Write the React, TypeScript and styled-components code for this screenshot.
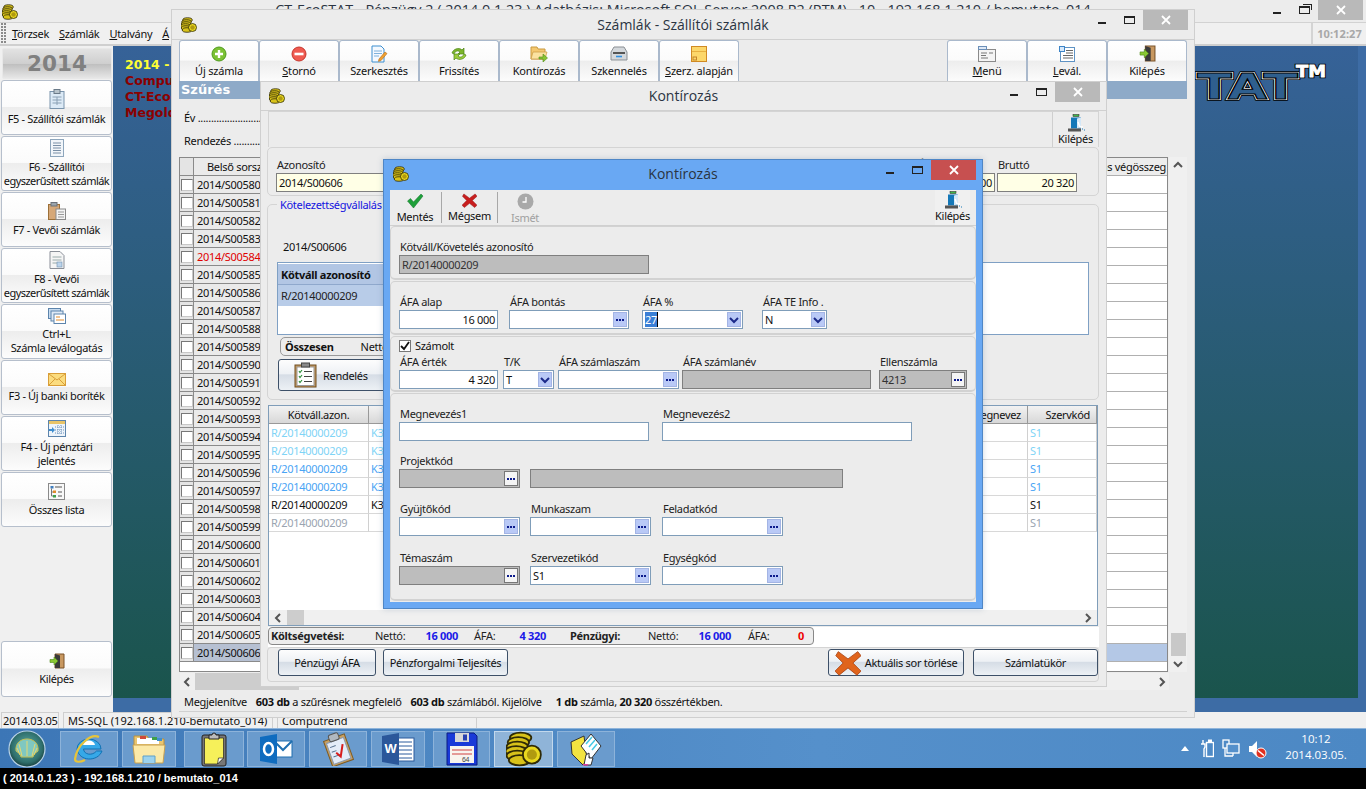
import React from 'react';
import styled, { createGlobalStyle } from 'styled-components';

const UI = `"Noto Sans", "DejaVu Sans", sans-serif`;
const TIGHT = '-0.3px';
const Global = createGlobalStyle`
  html, body { margin: 0; padding: 0; background: #f0f0f0; overflow: hidden; }
  body { font: 11px ${UI}; color: #111; letter-spacing: ${TIGHT}; }
  * { box-sizing: border-box; }
`;

/* ---------- icons ---------- */
const Coins = ({ s = 16 }: { s?: number }) => (
  <svg width={s} height={s} viewBox="0 0 32 32">
    {[[13, 6], [11, 10], [10, 14], [9, 18], [10, 22], [12, 26]].map(([x, y], i) => (
      <ellipse key={i} cx={x} cy={y} rx="9.5" ry="4.5" fill="#d8c21a" stroke="#2f2a06" strokeWidth="1.6" />
    ))}
    <circle cx="23" cy="21" r="8" fill="#e9d81f" stroke="#2f2a06" strokeWidth="1.6" />
    <circle cx="23" cy="21" r="4.5" fill="#b09a10" />
  </svg>
);
const PlusIcon = () => (
  <svg width="16" height="16" viewBox="0 0 16 16"><circle cx="8" cy="8" r="7" fill="#7cc234" stroke="#4e9a1c" /><path d="M8 4v8M4 8h8" stroke="#fff" strokeWidth="2.4" /></svg>
);
const MinusIcon = () => (
  <svg width="16" height="16" viewBox="0 0 16 16"><circle cx="8" cy="8" r="7" fill="#ef5a50" stroke="#c6362c" /><path d="M3.5 8h9" stroke="#fff" strokeWidth="2.6" /></svg>
);
const EditIcon = () => (
  <svg width="18" height="18" viewBox="0 0 18 18"><path d="M2 1h9l3 3v13H2z" fill="#f4f9ff" stroke="#3d8fd0" /><path d="M4 6h8M4 8.5h8M4 11h5" stroke="#7fb2dc" /><path d="M9 14l6-7 2 1.6-6 7-2.6.8z" fill="#f0a030" stroke="#b06c18" strokeWidth=".6" /></svg>
);
const RefreshIcon = () => (
  <svg width="18" height="16" viewBox="0 0 18 16"><path d="M2 7c1-4 7-6 10-3l2-2v6H8l2-2C8 4 5 5 4 8z" fill="#7cb52c" stroke="#4b8414" strokeWidth=".7" /><path d="M16 9c-1 4-7 6-10 3l-2 2V8h6l-2 2c2 2 5 1 6-2z" fill="#9ccc3c" stroke="#4b8414" strokeWidth=".7" /></svg>
);
const FolderIcon = () => (
  <svg width="18" height="16" viewBox="0 0 18 16"><path d="M1 1h6l1 2h7v10H1z" fill="#f4c870" stroke="#c99a40" /><path d="M1 13l2-7h14l-2 7z" fill="#fbe2a0" stroke="#c99a40" strokeWidth=".7" /><path d="M9 11h4V8l4.5 4-4.500 4v-3H9z" fill="#8ac432" stroke="#4e8a18" strokeWidth=".6" /></svg>
);
const ScanIcon = () => (
  <svg width="18" height="15" viewBox="0 0 18 15"><path d="M4 1h10l3 5v8H1V6z" fill="#d4d8dc" stroke="#8a8f94" /><path d="M3 6h12v2H3z" fill="#555" /><path d="M6 10.500h6" stroke="#2f8fe0" strokeWidth="1.600" /></svg>
);
const StickyIcon = () => (
  <svg width="16" height="16" viewBox="0 0 16 16"><rect x=".5" y=".5" width="15" height="15" fill="#fcd76a" stroke="#d08a24" /><path d="M1 5.500h14" stroke="#e7b040" /><rect x="2" y="11" width="3.500" height="3" fill="none" stroke="#c48428" /></svg>
);
const MenuIcon = () => (
  <svg width="18" height="16" viewBox="0 0 18 16"><rect x=".5" y="3.500" width="17" height="12" fill="#f4f4f4" stroke="#8a8a8a" /><rect x=".5" y=".5" width="8" height="3" fill="#dfe8f4" stroke="#6b8fb8" /><path d="M3 7h6M3 9.500h5M3 12h7M11 7h4" stroke="#777" /></svg>
);
const LevalIcon = () => (
  <svg width="16" height="16" viewBox="0 0 16 16"><rect x="1.500" y="1.500" width="14" height="14" fill="#fff" stroke="#5f93c4" /><rect x=".5" y=".5" width="5" height="5" fill="#d6e8fa" stroke="#3d85c8" /><path d="M7 4.500h7M7 7h7M4 9.500h10M4 12h10" stroke="#666" /></svg>
);
const DoorIcon = ({ s = 16 }: { s?: number }) => (
  <svg width={s} height={s} viewBox="0 0 16 16"><path d="M6 1h9v14H6z" fill="#c89860" stroke="#7a5228" /><path d="M6 1l5 1.500V15H6z" fill="#3a3a3a" /><path d="M1 6.500h4V4l4 4-4 4V9.500H1z" fill="#8ac832" stroke="#4e8a18" strokeWidth=".6" /></svg>
);
const ExitBlue = () => (
  <svg width="20" height="18" viewBox="0 0 20 18"><rect x="7" y=".5" width="6" height="2" fill="#3fb54a" stroke="#222" strokeWidth=".5" /><rect x="5" y="3.500" width="10" height="11" fill="#1478b8" /><path d="M11 4.500l4-1V13l-4 1.500z" fill="#d4e8f8" /><path d="M12 8l2 5h3" fill="none" stroke="#fff" strokeWidth="1.400" /><rect x="2" y="14.500" width="13" height="3" fill="#555" /><path d="M16 15h1M18 16h1" stroke="#1478b8" /></svg>
);
const CheckGreen = () => (
  <svg width="18" height="16" viewBox="0 0 18 16"><path d="M1.500 8l3-2.500 3 3.500 7.500-8L17 3 7.500 15z" fill="#1fa03a" stroke="#107028" strokeWidth=".5" /></svg>
);
const CrossRed = ({ s = 16, c = '#c81e1e', d = '#8f1010' }: { s?: number; c?: string; d?: string }) => (
  <svg width={s} height={s} viewBox="0 0 16 16"><path d="M2 1l6 4.500L14 1l2 2.500-5 4.500 5 5-2.500 2.500L8 11l-5.500 4.500L0 13l5-5L.5 3.500z" fill={c} stroke={d} strokeWidth=".5" /></svg>
);
const ClockGray = () => (
  <svg width="17" height="17" viewBox="0 0 17 17"><circle cx="8.500" cy="8.500" r="8" fill="#a9a9a9" /><path d="M9 4v5H5.500" stroke="#fff" strokeWidth="1.300" fill="none" /></svg>
);
const Chev = ({ dir = 'down', c = '#555' }: { dir?: 'up' | 'down' | 'left' | 'right'; c?: string }) => {
  const p = { up: 'M1 6l4-4 4 4', down: 'M1 3l4 4 4-4', left: 'M7 1L3 5l4 4', right: 'M3 1l4 4-4 4' }[dir];
  return <svg width="10" height="10" viewBox="0 0 10 10"><path d={p} fill="none" stroke={c} strokeWidth="2" /></svg>;
};
const SideSheet = () => (
  <svg width="16" height="20" viewBox="0 0 16 20"><rect x="1" y="2.500" width="14" height="17" fill="#dceaf6" stroke="#7a94ac" /><rect x="5" y=".5" width="6" height="4" fill="#b8c4cc" stroke="#6a7a88" /><path d="M3.500 8h9M3.500 11h9M3.500 14h9M8 8v8" stroke="#8aa0b4" /></svg>
);
const SideLines = () => (
  <svg width="14" height="18" viewBox="0 0 14 18"><rect x=".5" y=".5" width="13" height="17" fill="#f2f6fa" stroke="#8ea6bc" /><path d="M3 4h8M3 6.500h8M3 9h8M3 11.500h8M3 14h8" stroke="#7a8fa6" /></svg>
);
const SideClip = () => (
  <svg width="18" height="18" viewBox="0 0 18 18"><rect x=".5" y="2.500" width="11" height="15" fill="#d6a878" stroke="#9c7038" /><rect x="3" y=".5" width="6" height="3.500" fill="#9aa4ac" stroke="#6a7078" /><rect x="8" y="7" width="9.500" height="10.500" fill="#f4f4f4" stroke="#8a8a8a" /><path d="M10 10h6M10 12.500h6M10 15h6" stroke="#999" /></svg>
);
const SideDoc = () => (
  <svg width="16" height="18" viewBox="0 0 16 18"><path d="M1 .5h10l4 4v13H1z" fill="#f5f5f5" stroke="#8a8f98" /><path d="M3.500 6h9M3.500 9h9M3.500 12h6" stroke="#9aa" /><rect x="8" y="11" width="5" height="5" fill="#bcd4ec" stroke="#6f90b0" strokeWidth=".6" /></svg>
);
const SideStack = () => (
  <svg width="18" height="16" viewBox="0 0 18 16"><rect x=".5" y=".5" width="12" height="10" fill="#c8dcf0" stroke="#5c84ac" /><rect x="3" y="3" width="12" height="10" fill="#dfeaf6" stroke="#5c84ac" /><rect x="6" y="6" width="11.500" height="9.500" fill="#fff" stroke="#5c84ac" /><path d="M8 9h4M8 12h8" stroke="#e08a2a" /></svg>
);
const SideEnv = () => (
  <svg width="18" height="13" viewBox="0 0 18 13"><rect x=".5" y=".5" width="17" height="12" fill="#fbdc7e" stroke="#d99e38" /><path d="M1 1l8 6 8-6M1 12l6-6M17 12l-6-6" fill="none" stroke="#d99e38" /></svg>
);
const SideCash = () => (
  <svg width="18" height="17" viewBox="0 0 18 17"><rect x=".5" y=".5" width="17" height="16" fill="#eef4fa" stroke="#5c84ac" /><rect x="1" y="1" width="16" height="3" fill="#e8c468" /><path d="M7 7h9M7 10h9M7 13h9M10 5v10M13 5v10" stroke="#6d93bd" strokeDasharray="1 1" /><path d="M1 9h3V7l3 3-3 3v-2H1z" fill="#3f8ecf" /></svg>
);
const SideTree = () => (
  <svg width="17" height="17" viewBox="0 0 17 17"><rect x=".5" y=".5" width="16" height="16" fill="#f8f8f8" stroke="#8a8a8a" /><rect x="2.500" y="3" width="3" height="2.500" fill="#3f7ec0" /><rect x="5" y="7.500" width="3" height="2.500" fill="#e08a2a" /><rect x="5" y="12" width="3" height="2.500" fill="#3fa04a" /><path d="M7 4h7M10 9h4M10 13h4" stroke="#555" /><path d="M3.500 5.500V13H5M3.500 9H5" stroke="#777" fill="none" /></svg>
);
const ClipBig = () => (
  <svg width="25" height="26" viewBox="0 0 25 26"><rect x="2" y="3" width="21" height="22" fill="#c49a62" stroke="#6f4d1e" /><rect x="4" y="5" width="17" height="18.500" fill="#fff" stroke="#999" /><rect x="8.500" y="1" width="8" height="4" fill="#8a8a8a" stroke="#444" /><path d="M6 9l1 1.500 2-2.500M6 14l1 1.500 2-2.500M6 19l1 1.500 2-2.500" stroke="#2f8f3a" fill="none" strokeWidth="1.200" /><path d="M11 9.500h8M11 14.500h8M11 19.500h8" stroke="#444" strokeWidth="1.200" /></svg>
);
const XOrange = () => <CrossRed s={26} c="#e0641c" d="#a84010" />;

/* taskbar icons */
const Shell = () => (
  <svg width="38" height="38" viewBox="0 0 38 38">
    <defs><radialGradient id="orb" cx=".5" cy=".45" r=".6"><stop offset="0" stopColor="#5fb0a8" /><stop offset=".7" stopColor="#2f6f6c" /><stop offset="1" stopColor="#12302e" /></radialGradient></defs>
    <circle cx="19" cy="19" r="18" fill="url(#orb)" stroke="#b8d2e6" strokeWidth="1.200" />
    <path d="M8 21c-1-9 6-12 11-12s12 3 11 12l-4 3-1 3H13l-1-3z" fill="#7fc8c0" stroke="#c8c050" strokeWidth="1" />
    <path d="M19 26V11M14 26l-3-12M24 26l3-12M12 25l-3-7M26 25l3-7" stroke="#e8d870" strokeWidth="1" />
  </svg>
);
const IE = () => (
  <svg width="34" height="34" viewBox="0 0 34 34">
    <path d="M5 17a12 10 0 0 1 24 0H11.500c.5 6 9 7 13 2h5.500c-4 11-23 11-25-2z" fill="#36a8e8" stroke="#1172b4" />
    <path d="M11 13h12c-1-6-11-6-12 0z" fill="#fff" />
    <path d="M27 5c-8-4-22 8-24 22 0 4 6 3 10 1" fill="none" stroke="#e7c43a" strokeWidth="2.200" />
  </svg>
);
const FolderBig = () => (
  <svg width="34" height="32" viewBox="0 0 34 32">
    <path d="M2 3h13l2 3h15v7H2z" fill="#e9c670" stroke="#b89040" />
    <rect x="5" y="5" width="22" height="6" fill="#fff" />
    <rect x="8" y="3" width="6" height="3" fill="#d04a3a" /><rect x="20" y="4" width="5" height="3" fill="#3f9f4a" /><rect x="25" y="5" width="5" height="3" fill="#3f8fd0" />
    <path d="M1 12h32l-2 18H3z" fill="#fbe9a8" stroke="#c8a050" />
    <path d="M11 30v-7h12v7" fill="#9cd2ee" stroke="#5f9fc8" />
  </svg>
);
const ClipTask = () => (
  <svg width="26" height="36" viewBox="0 0 26 36">
    <rect x="1" y="4" width="24" height="31" rx="2" fill="#777" stroke="#222" />
    <path d="M3.500 7h19v20l-6 6h-13z" fill="#f6f05a" stroke="#222" strokeWidth=".7" />
    <path d="M16.500 33l1-6h5z" fill="#fff" stroke="#222" strokeWidth=".7" />
    <path d="M8 8V4h3a2 2 0 0 1 4 0h3v4z" fill="#bbb" stroke="#222" />
  </svg>
);
const Outlook = () => (
  <svg width="34" height="32" viewBox="0 0 34 32">
    <rect x="15" y="8" width="18" height="16" fill="#fff" stroke="#1f6fb0" />
    <path d="M15 8l9 9 9-9" fill="none" stroke="#1f6fb0" strokeWidth="2" />
    <path d="M1 4l17-3v30L1 28z" fill="#0f6cbf" />
    <ellipse cx="9.500" cy="16" rx="4.500" ry="6" fill="none" stroke="#fff" strokeWidth="2.500" />
  </svg>
);
const CheckTask = () => (
  <svg width="34" height="34" viewBox="0 0 34 34">
    <g transform="rotate(-20 17 17)">
      <rect x="6" y="5" width="22" height="27" fill="#c8a060" stroke="#7d5a24" />
      <rect x="8" y="8" width="18" height="22" fill="#e4ecf8" stroke="#8a9ab0" />
      <rect x="12" y="1" width="10" height="7" rx="2" fill="#b0b8c0" stroke="#555" />
      <path d="M10 13h6M10 18h5M10 23h7" stroke="#56708e" />
      <path d="M14 20l3 5 6-11" fill="none" stroke="#d81c1c" strokeWidth="2" />
    </g>
  </svg>
);
const Word = () => (
  <svg width="34" height="34" viewBox="0 0 34 34">
    <rect x="15" y="6" width="18" height="23" fill="#fff" stroke="#2a5a9c" />
    <path d="M18 10h13M18 14h13M18 18h13M18 22h13M18 26h13" stroke="#2a5a9c" />
    <path d="M1 4l17-3v32L1 30z" fill="#2b579a" />
    <text x="3.500" y="21" fontFamily="Liberation Sans" fontSize="13" fontWeight="700" fill="#fff">W</text>
  </svg>
);
const Floppy = () => (
  <svg width="32" height="34" viewBox="0 0 32 34">
    <path d="M1 1h27l3 3v29H1z" fill="#1a3ad8" stroke="#0c1c80" />
    <rect x="9" y="1" width="14" height="9" fill="#d8d8d8" /><rect x="17" y="2.500" width="4" height="6" fill="#2840b0" />
    <rect x="4" y="14" width="24" height="17" fill="#f8f4ee" />
    <path d="M6 18h20M6 22h20" stroke="#d04040" />
    <text x="16" y="30" fontFamily="Liberation Sans" fontSize="7" fill="#444">64</text>
  </svg>
);
const FolderDia = () => (
  <svg width="34" height="34" viewBox="0 0 34 34">
    <path d="M2 10l13-6 3 24-4 5L3 22z" fill="#f4e440" stroke="#333" />
    <path d="M12 14L22 2l10 12-10 13z" fill="#fff" stroke="#333" />
    <path d="M17 12l6-7M20 15l6-7M23 18l5-6" stroke="#44c8e4" strokeWidth="1.500" />
    <path d="M15 33l2-10 3-2v5h4l-2 7z" fill="#fff" stroke="#333" />
    <rect x="14" y="32" width="5" height="1.500" fill="#e040a0" />
  </svg>
);
const TrayPlug = () => (
  <svg width="14" height="20" viewBox="0 0 14 20" fill="none" stroke="#fff"><rect x="6.500" y="3.500" width="7" height="14" strokeWidth="1.400" /><rect x="8.500" y="1" width="3" height="2" fill="#fff" /><path d="M3 1v4M1 5h4v3l-1 2v8" strokeWidth="1.400" /></svg>
);
const TrayNet = () => (
  <svg width="18" height="20" viewBox="0 0 18 20" fill="none" stroke="#fff" strokeWidth="1.300"><rect x="1" y="1" width="6" height="8" /><rect x="5" y="5" width="12" height="9" fill="#5590cb" /><path d="M3 9v8h8M11 14v3" /></svg>
);
const TrayVol = () => (
  <svg width="20" height="20" viewBox="0 0 20 20"><path d="M1 7h3l5-5v16l-5-5H1z" fill="#fff" /><circle cx="13" cy="14" r="5" fill="#e03020" stroke="#fff" /><path d="M10 11.500l6 5" stroke="#fff" strokeWidth="1.600" /></svg>
);

/* ---------- shell of the main app ---------- */
const Page = styled.div`
  position: relative; width: 1366px; height: 789px; overflow: hidden;
  display: flex; flex-direction: column; background: #f0f0f0;
`;
const MainTitle = styled.div`
  height: 23px; display: grid; grid-template-columns: 1fr auto 1fr; align-items: start;
  background: #ececec; border-bottom: 1px solid #d2d2d2;
`;
const TitleText = styled.div<{ $size?: number }>`
  font: ${(p) => p.$size ?? 14}px "Open Sans", ${UI}; color: #2a3442; white-space: nowrap; line-height: 20px; letter-spacing: 0;
`;
const CoinSlot = styled.div<{ $l: number; $t: number }>`
  padding: ${(p) => p.$t}px 0 0 ${(p) => p.$l}px; display: flex;
`;
const CtrlRow = styled.div<{ $r: number }>`
  justify-self: end; display: flex; align-items: flex-start; margin-right: ${(p) => p.$r}px;
`;
const MinBtn = styled.div`
  width: 8px; height: 2px; margin: 12px 18px 0 0; background: #222;
`;
const MaxBtn = styled.div`
  width: 11px; height: 8px; margin: 6px 8px 0 0; border: 1px solid #222; border-top-width: 2px;
`;
const RestoreBtn = styled(MaxBtn)`
  height: 8px; margin-top: 6px; box-shadow: 2px -2px 0 -1px #ececec, 3px -3px 0 -1px #222;
`;
const CloseBtn = styled.div<{ $red?: boolean }>`
  width: 45px; height: 20px; display: flex; align-items: center; justify-content: center;
  background: ${(p) => (p.$red ? '#c75050' : '#b9b9b9')};
`;
const Controls = ({ r, red, restore }: { r: number; red?: boolean; restore?: boolean }) => (
  <CtrlRow $r={r}>
    <MinBtn />
    {restore ? <RestoreBtn /> : <MaxBtn />}
    <CloseBtn $red={red}>
      <svg width="10" height="10" viewBox="0 0 10 10"><path d="M1 1l8 8M9 1L1 9" stroke="#fff" strokeWidth="1.800" /></svg>
    </CloseBtn>
  </CtrlRow>
);
const MenuBar = styled.div`
  height: 23px; display: flex; align-items: center; background: #f0f0f0; border-bottom: 2px solid #cfcfcf;
`;
const Grip = styled.div`
  width: 6px; height: 21px; margin: 0 5px 0 1px;
  background: radial-gradient(circle at 1px 1px, #8a8a8a 1px, transparent 1px) 0 0 / 3px 3px;
`;
const MenuItem = styled.span`
  display: inline-block; font: 11px ${UI}; margin-right: 10px; color: #111;
  &::first-letter { text-decoration: underline; }
`;
const Clock = styled.div`
  margin-left: auto; height: 100%; width: 55px; border-left: 2px solid #d4d4d4; letter-spacing: .1px;
  font: bold 11px ${UI}; color: #a8a8a8; display: flex; align-items: center; justify-content: center;
`;
const Body = styled.div`
  height: 666px; display: flex;
`;
const Sidebar = styled.nav`
  width: 113px; padding: 2px 1px 15px 1px; display: flex; flex-direction: column; gap: 1px; background: #f0f0f0;
`;
const btnFace = `linear-gradient(#ffffff 0, #fbfbfb 48%, #ededed 50%, #fcfcfc 100%)`;
const YearBox = styled.div`
  height: 31px; background: linear-gradient(#e2e2e2, #cfcfcf 50%, #bdbdbd 50%, #e6e6e6); letter-spacing: 0;
  border: 1px solid #e8e8e8; border-radius: 2px; margin-left: 1px;
  font: bold 21.5px "DejaVu Sans", sans-serif; color: #808080; display: flex; align-items: center; justify-content: center;
`;
const SideBtn = styled.button<{ $h?: number; $bottom?: boolean }>`
  all: unset; box-sizing: border-box; height: ${(p) => p.$h ?? 55}px; margin-top: ${(p) => (p.$bottom ? 'auto' : 0)};
  border: 1px solid #b6bfcc; border-radius: 3px; background: ${btnFace}; letter-spacing: -0.35px; white-space: nowrap;
  display: flex; flex-direction: column; align-items: center; justify-content: center; gap: 3px;
  font: 11px/14px ${UI}; text-align: center; color: #111;
`;
const Squeeze = styled.span`
  letter-spacing: -0.55px;
`;
const Desktop = styled.div`
  flex: 1; background: #3d6ca5; padding: 0 8px 14px 0; display: flex;
`;
const DesktopInner = styled.div`
  flex: 1; position: relative; padding: 11px 12px; background: linear-gradient(#366298, #1a544c); letter-spacing: 0;
  font: bold 12.5px/16px "DejaVu Sans", sans-serif; color: #8b0000;
`;
const YellowLine = styled.div`color: #ffff33;`;
const LogoSvg = styled.svg`
  position: absolute; left: 1080px; top: 14px;
`;
const StatusBar = styled.div`
  height: 16px; display: flex; gap: 4px; padding: 0 1px; background: #f0f0f0; align-items: stretch;
`;
const StatusCell = styled.div<{ $w: number; $pad?: number }>`
  width: ${(p) => p.$w}px; border: 1px solid #cfcfcf; border-bottom: 0; padding: 0 0 0 ${(p) => p.$pad ?? 4}px; letter-spacing: ${(p) => (p.$pad === 1 ? '-0.15px' : 0)};
  font: 11px/15px ${UI}; white-space: nowrap; overflow: hidden;
`;
const Taskbar = styled.div`
  height: 40px; display: flex; align-items: center; padding: 0 0 0 8px;
  background: linear-gradient(90deg, #3c76b6, #4c86c2 30%, #5590cb 60%, #4c88c4);
  border-top: 1px solid #8fb4da;
`;
const TaskBtn = styled.div<{ $w: number; $gap?: number; $on?: boolean }>`
  width: ${(p) => p.$w}px; height: 36px; margin-left: ${(p) => p.$gap ?? 4}px;
  display: flex; align-items: center; justify-content: center;
  background: ${(p) => (p.$on ? '#8fb4d8' : '#6a9bcd')}; border: 1px solid ${(p) => (p.$on ? '#c2d8ec' : '#8db3da')};
`;
const Tray = styled.div`
  margin-left: auto; display: flex; align-items: center; gap: 8px; color: #fff;
`;
const ClockBox = styled.div`
  width: 74px; margin: -3px 13px 0 3px; text-align: center; font: 11.5px/16px "Open Sans", ${UI}; color: #fff; letter-spacing: 0;
`;
const TrayArrow = styled.div`
  width: 0; height: 0; margin-right: 3px; border: 4px solid transparent; border-top: 0; border-bottom: 5px solid #fff;
`;
const Black = styled.div`
  height: 21px; background: #000; color: #fff; padding-left: 3px; letter-spacing: 0;
  font: bold 11px/21px "Liberation Sans", sans-serif;
`;

/* ---------- windows ---------- */
const Win = styled.section<{ $x: number; $y: number; $w: number; $h: number }>`
  position: absolute; left: ${(p) => p.$x}px; top: ${(p) => p.$y}px; width: ${(p) => p.$w}px; height: ${(p) => p.$h}px;
  background: #ececec; border: 1px solid #cfcfcf; display: flex; flex-direction: column;
`;
const BlueWin = styled(Win)`
  background: #69a8f3; border-color: #4f86c6; box-shadow: 0 0 6px rgba(60,90,130,.25);
`;
const WinTitle = styled.div<{ $h: number; $line?: boolean }>`
  height: ${(p) => p.$h}px; flex: none; display: grid; grid-template-columns: 1fr auto 1fr; align-items: start;
  ${(p) => (p.$line ? 'border-bottom: 1px solid #d0d0d0;' : '')}
`;
const TitleMid = styled(TitleText)<{ $pt?: number }>`
  padding-top: ${(p) => p.$pt ?? 5}px;
`;
const ToolStrip = styled.div`
  height: 41px; flex: none; padding: 0 7px; display: flex;
`;
const ToolBtn = styled.button`
  all: unset; box-sizing: border-box; width: 80px; height: 41px; flex: none; letter-spacing: -0.2px;
  border: 1px solid #aab9cc; border-bottom: 0; border-radius: 3px 3px 0 0; background: ${btnFace};
  display: flex; flex-direction: column; align-items: center; padding-top: 2px; font: 11px/14px ${UI};
  u { text-decoration: underline; }
`;
const ToolIcon = styled.div`
  height: 21px; display: flex; align-items: center; justify-content: center;
`;
const Grow = styled.div`flex: 1;`;
const FilterHead = styled.div`
  height: 18px; flex: none; margin: 0 7px; background: #8eaac8; color: #fff; letter-spacing: 0;
  font: bold 13px/18px "DejaVu Sans", sans-serif; padding-left: 2px;
`;
const FilterBody = styled.div`
  height: 58px; flex: none; padding: 12px 0 0 12px; font: 11px ${UI}; display: flex; flex-direction: column; gap: 9px;
  white-space: nowrap;
`;
const Dotted = styled.div`
  height: 14px; line-height: 14px;
`;
const Grid = styled.div`
  height: 515px; flex: none; margin: 0 7px 0 7px; display: flex; align-items: stretch;
`;
const GridLeft = styled.div`
  width: 200px; background: #fff; border: 1px solid #888; border-right: 0; display: flex; flex-direction: column;
`;
const RowL = styled.div<{ $head?: boolean }>`
  height: 18px; flex: none; display: flex; border-bottom: 1px solid #8a8a8a; background: #eaeaea;
`;
const Sel = styled.div`
  width: 14px; flex: none; border-right: 1px solid #8a8a8a; display: flex; align-items: center; justify-content: center; background: #e4e4e4;
`;
const Tick = styled.div`
  width: 12px; height: 12px; background: #fff; border: 1px solid #c8c8c8; border-top-color: #777; border-left-color: #777;
`;
const CellL = styled.div<{ $bad?: boolean; $sel?: boolean; $head?: boolean }>`
  flex: 1; padding-left: ${(p) => (p.$head ? 13 : 3)}px; font: 11px/17px ${UI};
  color: ${(p) => (p.$bad ? '#e00000' : '#111')}; background: ${(p) => (p.$sel ? '#b6c0d2' : '#eaeaea')}; white-space: nowrap;
`;
const GridMid = styled.div`flex: 1; background: #fff;`;
const GridRight = styled.div`
  width: 164px; background: #fff; border: 1px solid #888; border-left: 0; display: flex; flex-direction: column;
`;
const RCell = styled.div<{ $sel?: boolean; $head?: boolean }>`
  height: 18px; flex: none; border-bottom: 1px solid #b0b0b0; background: ${(p) => (p.$sel ? '#b4c8e6' : p.$head ? '#ededed' : '#fff')};
  font: 11px/17px ${UI}; text-align: right; padding-right: 1px; white-space: nowrap;
`;
const VScroll = styled.div`
  width: 18px; flex: none; padding: 4px 0 3px; margin-left: 1px; display: flex; flex-direction: column; align-items: center; background: #f0f0f0;
`;
const VThumb = styled.div`
  width: 15px; height: 23px; margin-top: auto; margin-bottom: 3px; background: #c8c8c8;
`;
const HScroll = styled.div<{ $m: string; $h: number }>`
  height: ${(p) => p.$h}px; flex: none; margin: ${(p) => p.$m}; display: flex; align-items: center; padding: 0 2px; background: #f0f0f0;
`;
const HThumb = styled.div<{ $w: number; $l?: number }>`
  width: ${(p) => p.$w}px; height: 100%; background: #cdcdcd; margin-left: ${(p) => p.$l ?? 0}px;
`;
const PushRight = styled.div`margin-left: auto; display: flex;`;
const StatusLine = styled.div`
  margin: 3px 7px 0; height: 19px; padding-left: 5px; border-bottom: 1px solid #d0d0d0; font: 11px/17px ${UI}; white-space: pre; display: flex;
  b { font-weight: 700; }
`;
const Stat = styled.span<{ $l?: number }>`
  margin-left: ${(p) => p.$l ?? 0}px;
`;

/* middle window */
const KilepesStrip = styled.div`
  height: 36px; flex: none; margin: 0 7px; padding: 0; display: flex; justify-content: flex-end;
  border: 1px solid #d4d4d4; border-bottom: 0;
`;
const KilepesBtn = styled.div`
  width: 46px; height: 35px; display: flex; flex-direction: column; align-items: center; padding-top: 2px;
  font: 11px/13px ${UI}; border-left: 1px solid #cfcfcf; background: #ededed; gap: 0;
`;
const Panel = styled.div<{ $h: number; $t?: number }>`
  height: ${(p) => p.$h}px; flex: none; margin: ${(p) => p.$t ?? 0}px 7px 0 6px; border: 1px solid #d4d4d4; border-radius: 5px; position: relative;
`;
const TopRow = styled.div`
  display: flex; justify-content: space-between; padding: 8px 21px 0 8px;
`;
const Field = styled.div<{ $w: number; $l?: number; $pad?: number }>`
  width: ${(p) => p.$w}px; flex: none; margin-left: ${(p) => p.$l ?? 0}px;
  > label { display: block; height: 17px; line-height: 17px; padding-left: ${(p) => p.$pad ?? 1}px; white-space: nowrap; font: 11px/17px ${UI}; color: #222; }
`;
const Input = styled.div<{ $tone?: 'white' | 'gray' | 'cream' }>`
  height: 19px; display: flex; align-items: center;
  padding: 0 2px 0 2px; font: 11px ${UI}; overflow: hidden;
  background: ${(p) => (p.$tone === 'gray' ? '#bdbdbd' : p.$tone === 'cream' ? '#ffffe6' : '#fff')};
  border: 1px solid ${(p) => (p.$tone === 'gray' || p.$tone === 'cream' ? '#7f7f7f' : '#7f9db9')};
  color: ${(p) => (p.$tone === 'gray' ? '#333' : '#111')};
`;
const InputText = styled.span<{ $right?: boolean }>`
  flex: 1; white-space: nowrap; text-align: ${(p) => (p.$right ? 'right' : 'left')};
`;
const Pick = styled.div<{ $off?: boolean }>`
  width: 14px; height: 15px; flex: none; margin-right: -1px; display: flex; align-items: center; justify-content: center; gap: 1px;
  background: ${(p) => (p.$off ? '#f4f4f4' : '#b9c9f6')}; border: 1px solid ${(p) => (p.$off ? '#777' : '#a3b4e4')};
  i { width: 2px; height: 2px; background: #0b1a8c; display: block; }
`;
const Dots = ({ off }: { off?: boolean }) => <Pick $off={off}><i /><i /><i /></Pick>;
const Drop = () => <Pick><Chev dir="down" c="#1c2a8a" /></Pick>;
const Legend = styled.div`
  position: absolute; left: 9px; top: -7px; padding: 0 3px; background: #ececec; color: #1414e0; font: 11px/14px ${UI}; white-space: nowrap;
`;
const RefNo = styled.div`
  padding: 34px 0 0 15px; height: 57px; font: 11px ${UI}; white-space: nowrap;
`;
const MiniGrid = styled.div`
  margin: 0 9px 0 9px; height: 73px; background: #fff; border: 1px solid #7fa0c4; padding-top: 1px;
`;
const MiniHead = styled.div`
  width: 300px; height: 21px; background: #b2c6e4; font: bold 11px/21px ${UI}; padding-left: 3px; border-bottom: 1px solid #8fa8cc;
`;
const MiniRow = styled.div`
  width: 300px; height: 21px; background: #b8cce8; font: 11px/21px ${UI}; padding-left: 3px; color: #222;
`;
const SumPill = styled.div`
  margin: 2px 0 0 12px; width: 300px; height: 19px; border: 1px solid #999; border-radius: 5px 0 0 5px; padding-left: 4px;
  display: flex; gap: 27px; font: 11px/17px ${UI}; white-space: nowrap; b { font-weight: 700; }
`;
const PushBtn = styled.button<{ $w: number; $h?: number; $l?: number }>`
  all: unset; box-sizing: border-box; width: ${(p) => p.$w}px; height: ${(p) => p.$h ?? 27}px; margin-left: ${(p) => p.$l ?? 0}px; flex: none;
  border: 1px solid #3d5068; border-radius: 3px; display: flex; align-items: center; justify-content: center; gap: 4px; letter-spacing: ${TIGHT};
  background: linear-gradient(#fdfdfd, #eef1f5 45%, #d6dde6 50%, #edf1f5); font: 11px ${UI}; color: #111; white-space: nowrap;
`;
const RendRow = styled.div`
  margin: 3px 0 0 10px; display: flex;
`;
const RendBtn = styled(PushBtn)`
  justify-content: flex-start; gap: 5px; padding-left: 14px;
`;
const Grid2 = styled.div`
  margin: 5px 8px 0 7px; height: 205px; flex: none; background: #fff; display: flex; border: 1px solid #7f9db9; border-bottom: 0;
`;
const G2Col = styled.div<{ $w?: number }>`
  ${(p) => (p.$w ? `width:${p.$w}px; flex:none;` : 'flex:1;')} display: flex; flex-direction: column;
`;
const G2Head = styled.div<{ $right?: boolean }>`
  height: 18px; flex: none; background: linear-gradient(#f2f2f2, #d8d8d8); border-right: 1px solid #999; border-bottom: 1px solid #999;
  text-align: ${(p) => (p.$right ? 'right' : 'center')}; padding-right: ${(p) => (p.$right ? 6 : 0)}px; font: 11px/17px ${UI}; white-space: nowrap; overflow: hidden;
`;
const G2Cell = styled.div<{ $c?: string }>`
  height: 18px; flex: none; border-bottom: 1px solid #d8d8d8; border-right: 1px solid #d0d0d0;
  font: 11px/17px ${UI}; padding-left: 2px; color: ${(p) => p.$c ?? '#111'}; white-space: nowrap; overflow: hidden;
`;
const HScrollBlue = styled(HScroll)`
  border-bottom: 1px solid #7f9db9; border-left: 1px solid #7f9db9; border-right: 1px solid #7f9db9; padding: 0 4px 0 4px;
`;
const SumWhite = styled.div`
  height: 20px; flex: none; margin: 1px 7px 0 7px; background: #fff;
`;
const SumRow = styled.div`
  width: 546px; height: 18px; border: 1px solid #888; border-radius: 4px; background: #ededed; padding-left: 2px; display: flex;
  font: 11px/16px ${UI}; white-space: nowrap;
`;
const Sm = styled.span<{ $w: number; $b?: boolean; $c?: string; $r?: boolean }>`
  width: ${(p) => p.$w}px; flex: none; font-weight: ${(p) => (p.$b ? 700 : 400)}; color: ${(p) => p.$c ?? '#222'};
  text-align: ${(p) => (p.$r ? 'right' : 'left')};
`;
const BtnPanel = styled.div`
  height: 35px; flex: none; margin: 0 7px 0 6px; border: 1px solid #d4d4d4; border-radius: 4px; padding: 1px 0 0 10px; display: flex;
`;

/* top window */
const TopBody = styled.div`
  flex: 1; margin: 0 6px 6px; background: #ececec; display: flex; flex-direction: column;
`;
const TopBar = styled.div`
  height: 36px; flex: none; display: flex; padding-left: 7px; border-bottom: 1px solid #d0d0d0;
`;
const BarBtn = styled.div<{ $w: number; $off?: boolean }>`
  width: ${(p) => p.$w}px; height: 35px; padding-top: 3px; display: flex; flex-direction: column; align-items: center; gap: 1px;
  font: 11px/13px ${UI}; color: ${(p) => (p.$off ? '#a0a0a0' : '#111')};
`;
const BarSep = styled.div<{ $l: number }>`
  width: 1px; height: 31px; margin: 2px 7px 0 ${(p) => p.$l}px; background: #a8a8a8;
`;
const KilepesTop = styled.div`
  margin-left: auto; margin-right: 6px; width: 35px; padding-top: 1px; display: flex; flex-direction: column; align-items: center; font: 11px/13px ${UI}; background: #f0f0f0;
`;
const FPanel = styled.div<{ $h: number; $p: string }>`
  height: ${(p) => p.$h}px; flex: none; margin-bottom: 1px; border: 1px solid #d2d2d2; border-bottom-width: 2px; border-radius: 5px; padding: ${(p) => p.$p};
`;
const FRow = styled.div<{ $mb?: number }>`
  display: flex; margin-bottom: ${(p) => p.$mb ?? 0}px;
`;
const CheckRow = styled.div`
  display: flex; align-items: center; gap: 4px; height: 15px; font: 11px ${UI};
`;
const CheckBox = styled.div`
  width: 12px; height: 12px; background: #fff; border: 1px solid #777; display: flex; align-items: center; justify-content: center;
`;
const CaretText = styled.span`
  background: #3a7fd6; color: #fff; border-right: 1px solid #000; line-height: 14px;
`;

const rows = Array.from({ length: 27 }, (_, i) => `2014/S00${580 + i}`);
const CY = '#7fd4f6';
const BL = '#4aa4f4';
const GR = '#9aa4b0';
const tones = [CY, CY, BL, BL, '#111', GR];

const Tool = ({ icon, children }: { icon: React.ReactNode; children: React.ReactNode }) => (
  <ToolBtn><ToolIcon>{icon}</ToolIcon><span>{children}</span></ToolBtn>
);

const Side = ({ icon, t, h, bottom }: { icon: React.ReactNode; t: React.ReactNode; h?: number; bottom?: boolean }) => (
  <SideBtn $h={h} $bottom={bottom}>{icon}<span>{t}</span></SideBtn>
);

const In = ({ w, l, label, tone, right, val, dots, drop, off, pad }: {
  w: number; l?: number; label?: string; tone?: 'white' | 'gray' | 'cream'; right?: boolean; val?: React.ReactNode; dots?: boolean; drop?: boolean; off?: boolean; pad?: number;
}) => (
  <Field $w={w} $l={l} $pad={pad}>
    <label>{label}</label>
    <Input $tone={tone}>
      <InputText $right={right}>{val}</InputText>
      {dots && <Dots off={off} />}
      {drop && <Drop />}
    </Input>
  </Field>
);

const LOGO = { fontFamily: 'DejaVu Sans', fontWeight: 700, lengthAdjust: 'spacingAndGlyphs' as const };

export default function App() {
  return (
    <Page>
      <Global />
      <MainTitle>
        <CoinSlot $l={2} $t={4}><Coins s={16} /></CoinSlot>
        <TitleText $size={14.4}>CT-EcoSTAT - Pénzügy 2 ( 2014.0.1.23 ) Adatbázis: Microsoft SQL Server 2008 R2 (RTM) - 10 - 192.168.1.210 / bemutato_014</TitleText>
        <Controls r={3} restore />
      </MainTitle>
      <MenuBar>
        <Grip />
        <MenuItem>Törzsek</MenuItem><MenuItem>Számlák</MenuItem><MenuItem>Utalvány</MenuItem><MenuItem>Á</MenuItem>
        <Clock>10:12:27</Clock>
      </MenuBar>
      <Body>
        <Sidebar>
          <YearBox>2014</YearBox>
          <Side icon={<SideSheet />} t="F5 - Szállítói számlák" />
          <Side icon={<SideLines />} t={<>F6 - Szállítói<br /><Squeeze>egyszerűsített számlák</Squeeze></>} />
          <Side icon={<SideClip />} t="F7 - Vevői számlák" />
          <Side icon={<SideDoc />} t={<>F8 - Vevői<br /><Squeeze>egyszerűsített számlák</Squeeze></>} />
          <Side icon={<SideStack />} t={<>Ctrl+L<br />Számla leválogatás</>} />
          <Side icon={<SideEnv />} t="F3 - Új banki boríték" />
          <Side icon={<SideCash />} t={<>F4 - Új pénztári<br />jelentés</>} />
          <Side icon={<SideTree />} t="Összes lista" />
          <Side icon={<DoorIcon s={16} />} t="Kilépés" h={56} bottom />
        </Sidebar>
        <Desktop>
          <DesktopInner>
            <YellowLine>2014 -</YellowLine>
            <div>Compu</div>
            <div>CT-Eco</div>
            <div>Megold</div>
            <LogoSvg width="140" height="46" viewBox="0 0 140 46">
              <text x="4" y="39" {...LOGO} fontSize="35.5" textLength="101" fill="none" stroke="#000" strokeWidth="3.6">TAT</text>
              <text x="4" y="39" {...LOGO} fontSize="35.5" textLength="101" fill="none" stroke="#fff" strokeWidth="2.2">TAT</text>
              <text x="4" y="39" {...LOGO} fontSize="35.5" textLength="101" fill="#2f5f8e" stroke="#000" strokeWidth="1">TAT</text>
              <text x="103" y="17" {...LOGO} fontSize="16.5" textLength="30" fill="none" stroke="#000" strokeWidth="2.6">TM</text>
              <text x="103" y="17" {...LOGO} fontSize="16.5" textLength="30" fill="#fff" stroke="#fff" strokeWidth=".8">TM</text>
            </LogoSvg>
          </DesktopInner>
        </Desktop>
      </Body>
      <StatusBar>
        <StatusCell $w={58} $pad={1}>2014.03.05</StatusCell>
        <StatusCell $w={210}>MS-SQL (192.168.1.210-bemutato_014)</StatusCell>
        <StatusCell $w={200}>Computrend</StatusCell>
      </StatusBar>
      <Taskbar>
        <Shell />
        <TaskBtn $w={58} $gap={14}><IE /></TaskBtn>
        <TaskBtn $w={54}><FolderBig /></TaskBtn>
        <TaskBtn $w={60} $gap={8}><ClipTask /></TaskBtn>
        <TaskBtn $w={58} $gap={3}><Outlook /></TaskBtn>
        <TaskBtn $w={58}><CheckTask /></TaskBtn>
        <TaskBtn $w={54}><Word /></TaskBtn>
        <TaskBtn $w={57} $gap={8}><Floppy /></TaskBtn>
        <TaskBtn $w={59} $on><Coins s={36} /></TaskBtn>
        <TaskBtn $w={58}><FolderDia /></TaskBtn>
        <Tray>
          <TrayArrow />
          <TrayPlug /><TrayNet /><TrayVol />
          <ClockBox>10:12<br />2014.03.05.</ClockBox>
        </Tray>
      </Taskbar>
      <Black>( 2014.0.1.23 ) - 192.168.1.210 / bemutato_014</Black>

      {/* Számlák */}
      <Win $x={171} $y={9} $w={1024} $h={709}>
        <WinTitle $h={30} $line>
          <CoinSlot $l={9} $t={7}><Coins s={16} /></CoinSlot>
          <TitleMid>Számlák - Szállítói számlák</TitleMid>
          <Controls r={6} />
        </WinTitle>
        <ToolStrip>
          <Tool icon={<PlusIcon />}>Új számla</Tool>
          <Tool icon={<MinusIcon />}><u>S</u>tornó</Tool>
          <Tool icon={<EditIcon />}>Szerkesztés</Tool>
          <Tool icon={<RefreshIcon />}>Frissítés</Tool>
          <Tool icon={<FolderIcon />}>Kontírozás</Tool>
          <Tool icon={<ScanIcon />}>Szkennelés</Tool>
          <Tool icon={<StickyIcon />}><u>S</u>zerz. alapján</Tool>
          <Grow />
          <Tool icon={<MenuIcon />}><u>M</u>enü</Tool>
          <Tool icon={<LevalIcon />}><u>L</u>evál.</Tool>
          <Tool icon={<DoorIcon s={17} />}>Kilépés</Tool>
        </ToolStrip>
        <FilterHead>Szűrés</FilterHead>
        <FilterBody>
          <Dotted>Év ............................</Dotted>
          <Dotted>Rendezés ..................</Dotted>
        </FilterBody>
        <Grid>
          <GridLeft>
            <RowL><Sel /><CellL $head>Belső sorszám</CellL></RowL>
            {rows.map((r, i) => (
              <RowL key={r}><Sel><Tick /></Sel><CellL $bad={i === 4} $sel={i === 26}>{r}</CellL></RowL>
            ))}
          </GridLeft>
          <GridMid />
          <GridRight>
            <RCell $head>Bruttó számlás végösszeg</RCell>
            {rows.map((r, i) => <RCell key={r} $sel={i === 26} />)}
          </GridRight>
          <VScroll>
            <Chev dir="up" />
            <VThumb />
            <Chev dir="down" />
          </VScroll>
        </Grid>
        <HScroll $m="1px 25px 0 8px" $h={17}>
          <Chev dir="left" />
          <HThumb $w={104} $l={3} />
          <PushRight><Chev dir="right" /></PushRight>
        </HScroll>
        <StatusLine>
          <span>Megjelenítve</span>
          <Stat $l={9}><b>603 db</b> a szűrésnek megfelelő</Stat>
          <Stat $l={9}><b>603 db</b> számlából. Kijelölve</Stat>
          <Stat $l={14}><b>1 db</b> számla, <b>20 320</b> összértékben.</Stat>
        </StatusLine>
      </Win>

      {/* Kontírozás middle */}
      <Win $x={260} $y={81} $w={847} $h={606}>
        <WinTitle $h={29} $line>
          <CoinSlot $l={8} $t={6}><Coins s={16} /></CoinSlot>
          <TitleMid $pt={4}>Kontírozás</TitleMid>
          <Controls r={6} />
        </WinTitle>
        <KilepesStrip><KilepesBtn><ExitBlue />Kilépés</KilepesBtn></KilepesStrip>
        <Panel $h={49}>
          <TopRow>
            <In w={160} label="Azonosító" tone="cream" val="2014/S00606" />
            <FRow>
              <In w={88} label="ÁFA" tone="cream" right val="16 000" pad={11} />
              <In w={80} l={2} label="Bruttó" tone="cream" right val="20 320" />
            </FRow>
          </TopRow>
        </Panel>
        <Panel $h={196} $t={8}>
          <Legend>Kötelezettségvállalás</Legend>
          <RefNo>2014/S00606</RefNo>
          <MiniGrid>
            <MiniHead>Kötváll azonosító</MiniHead>
            <MiniRow>R/20140000209</MiniRow>
          </MiniGrid>
          <SumPill><b>Összesen</b><span>Nettó</span></SumPill>
          <RendRow><RendBtn $w={200} $h={32}><ClipBig />Rendelés</RendBtn></RendRow>
        </Panel>
        <Grid2>
          <G2Col $w={100}>
            <G2Head>Kötváll.azon.</G2Head>
            {tones.map((c, i) => <G2Cell key={i} $c={c}>R/20140000209</G2Cell>)}
          </G2Col>
          <G2Col $w={40}>
            <G2Head />
            {tones.slice(0, 5).map((c, i) => <G2Cell key={i} $c={c}>K3</G2Cell>)}
            <G2Cell />
          </G2Col>
          <G2Col />
          <G2Col $w={70}>
            <G2Head $right>Megnevez</G2Head>
            {tones.map((c, i) => <G2Cell key={i} />)}
          </G2Col>
          <G2Col $w={69}>
            <G2Head $right>Szervkód</G2Head>
            {tones.map((c, i) => <G2Cell key={i} $c={c}>S1</G2Cell>)}
          </G2Col>
        </Grid2>
        <HScrollBlue $m="0 8px 0 7px" $h={16}>
          <Chev dir="left" />
          <HThumb $w={17} $l={4} />
          <PushRight><Chev dir="right" /></PushRight>
        </HScrollBlue>
        <SumWhite>
          <SumRow>
            <Sm $w={104} $b>Költségvetési:</Sm><Sm $w={45}>Nettó:</Sm><Sm $w={38} $b $c="#1a1ae8" $r>16 000</Sm>
            <Sm $w={16} /><Sm $w={40}>ÁFA:</Sm><Sm $w={32} $b $c="#1a1ae8" $r>4 320</Sm><Sm $w={24} />
            <Sm $w={78} $b>Pénzügyi:</Sm><Sm $w={44}>Nettó:</Sm><Sm $w={39} $b $c="#1a1ae8" $r>16 000</Sm>
            <Sm $w={17} /><Sm $w={50}>ÁFA:</Sm><Sm $w={6} $b $c="#ee0000">0</Sm>
          </SumRow>
        </SumWhite>
        <BtnPanel>
          <PushBtn $w={98}>Pénzügyi ÁFA</PushBtn>
          <PushBtn $w={125} $l={7}>Pénzforgalmi Teljesítés</PushBtn>
          <PushBtn $w={136} $l={320}><XOrange />Aktuális sor törlése</PushBtn>
          <PushBtn $w={125} $l={9}>Számlatükör</PushBtn>
        </BtnPanel>
      </Win>

      {/* Kontírozás top */}
      <BlueWin $x={383} $y={159} $w={600} $h={450}>
        <WinTitle $h={30}>
          <CoinSlot $l={9} $t={6}><Coins s={16} /></CoinSlot>
          <TitleMid $pt={4}>Kontírozás</TitleMid>
          <Controls r={6} red />
        </WinTitle>
        <TopBody>
          <TopBar>
            <BarBtn $w={36}><CheckGreen />Mentés</BarBtn>
            <BarSep $l={8} />
            <BarBtn $w={41}><CrossRed s={15} />Mégsem</BarBtn>
            <BarSep $l={7} />
            <BarBtn $w={40} $off><ClockGray />Ismét</BarBtn>
            <KilepesTop><ExitBlue />Kilépés</KilepesTop>
          </TopBar>
          <FPanel $h={54} $p="11px 0 0 8px">
            <In w={250} label="Kötváll/Követelés azonosító" tone="gray" val="R/20140000209" />
          </FPanel>
          <FPanel $h={54} $p="11px 0 0 8px">
            <FRow>
              <In w={99} label="ÁFA alap" right val="16 000" />
              <In w={120} l={11} label="ÁFA bontás" dots />
              <In w={101} l={13} label="ÁFA %" drop val={<CaretText>27</CaretText>} />
              <In w={65} l={19} label="ÁFA TE Info ." val="N" drop />
            </FRow>
          </FPanel>
          <FPanel $h={56} $p="1px 0 0 8px">
            <CheckRow>
              <CheckBox><svg width="10" height="10" viewBox="0 0 10 10"><path d="M1 5l3 3 5-7" fill="none" stroke="#111" strokeWidth="1.800" /></svg></CheckBox>
              Számolt
            </CheckRow>
            <FRow>
              <In w={99} label="ÁFA érték" right val="4 320" />
              <In w={51} l={5} label="T/K" val="T" drop />
              <In w={121} l={4} label="ÁFA számlaszám" dots />
              <In w={189} l={3} label="ÁFA számlanév" tone="gray" />
              <In w={88} l={8} label="Ellenszámla" tone="gray" val="4213" dots off />
            </FRow>
          </FPanel>
          <FPanel $h={208} $p="11px 0 0 8px">
            <FRow $mb={11}>
              <In w={250} label="Megnevezés1" />
              <In w={250} l={13} label="Megnevezés2" />
            </FRow>
            <FRow $mb={12}>
              <In w={121} label="Projektkód" tone="gray" dots off />
              <In w={313} l={10} tone="gray" />
            </FRow>
            <FRow $mb={13}>
              <In w={121} label="Gyüjtőkód" dots />
              <In w={121} l={10} label="Munkaszam" dots />
              <In w={121} l={11} label="Feladatkód" dots />
            </FRow>
            <FRow>
              <In w={121} label="Témaszám" tone="gray" dots off />
              <In w={121} l={10} label="Szervezetikód" val="S1" dots />
              <In w={121} l={11} label="Egységkód" dots />
            </FRow>
          </FPanel>
        </TopBody>
      </BlueWin>
    </Page>
  );
}
